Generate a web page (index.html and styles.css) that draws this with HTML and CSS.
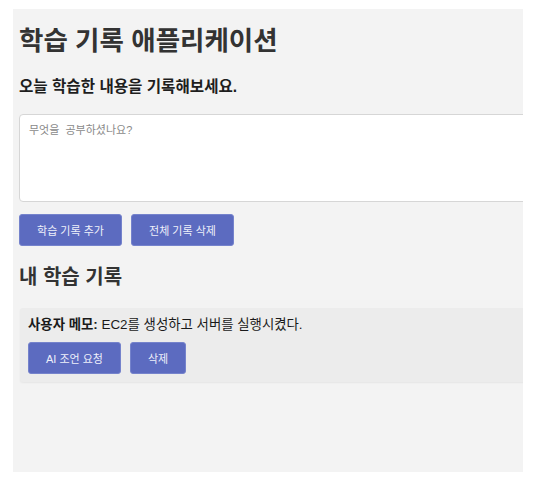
FILE: index.html
```html
<!DOCTYPE html>
<html lang="ko">
<head>
<meta charset="utf-8">
<title>학습 기록 애플리케이션</title>
<link rel="stylesheet" href="styles.css">
</head>
<body>
<div class="frame">
  <div class="app">
    <h1 class="title">학습 기록 애플리케이션</h1>
    <p class="subtitle">오늘 학습한 내용을 기록해보세요.</p>
    <textarea class="input" placeholder="무엇을  공부하셨나요?"></textarea>
    <div class="actions">
      <button class="btn btn-add">학습 기록 추가</button>
      <button class="btn btn-clear">전체 기록 삭제</button>
    </div>
    <h2 class="section-title">내 학습 기록</h2>
    <div class="card">
      <p class="memo"><strong>사용자 메모:</strong> EC2를 생성하고 서버를 실행시켰다.</p>
      <div class="actions card-actions">
        <button class="btn btn-ai">AI 조언 요청</button>
        <button class="btn btn-del">삭제</button>
      </div>
    </div>
  </div>
</div>
</body>
</html>
```

FILE: styles.css
```css
html, body {
  margin: 0;
  padding: 0;
  background: #ffffff;
}

body {
  font-family: "Liberation Sans", "Noto Sans CJK KR", sans-serif;
  color: #333333;
}

.frame {
  margin: 9px 0 0 13px;
  width: 510px;
  height: 463px;
  overflow: hidden;
  background: #f3f3f3;
}

.app {
  width: 620px;
  padding: 16px 0 0 6px;
}

.title {
  margin: 0;
  font-size: 26.5px;
  line-height: 32px;
  font-weight: 700;
  color: #333333;
}

.subtitle {
  margin: 20px 0 0;
  font-size: 15.6px;
  line-height: 20px;
  font-weight: 700;
  color: #1e1e1e;
}

.input {
  display: block;
  box-sizing: border-box;
  margin: 17px 0 0;
  width: 600px;
  height: 88px;
  padding: 8px 9px;
  border: 1px solid #d6d6d6;
  border-radius: 4px;
  background: #ffffff;
  font-family: "Liberation Sans", "Noto Sans CJK KR", sans-serif;
  font-size: 11px;
  line-height: 14px;
  resize: none;
  outline: none;
}

.input::placeholder {
  color: #8a8a8a;
}

.actions {
  display: flex;
  gap: 9px;
  margin-top: 12px;
}

.btn {
  box-sizing: border-box;
  height: 32px;
  padding: 0;
  border: 1px solid #7583cc;
  border-radius: 3px;
  background: #5c6bc0;
  color: #eef0fa;
  font-family: "Liberation Sans", "Noto Sans CJK KR", sans-serif;
  font-size: 11px;
  cursor: pointer;
}

.btn-add,
.btn-clear {
  width: 103px;
}

.section-title {
  margin: 19px 0 0;
  font-size: 20px;
  line-height: 24px;
  font-weight: 700;
  color: #333333;
}

.card {
  margin: 19px 0 0 1px;
  padding: 8px 8px 8px;
  background: #ececec;
  border-radius: 3px;
  box-shadow: 0 1px 2px rgba(0, 0, 0, 0.06);
}

.memo {
  margin: 0;
  font-size: 13.4px;
  line-height: 18px;
  color: #1a1a1a;
}

.memo strong {
  font-weight: 700;
}

.card-actions {
  margin-top: 8px;
}

.btn-ai {
  width: 93px;
}

.btn-del {
  width: 56px;
}
```
